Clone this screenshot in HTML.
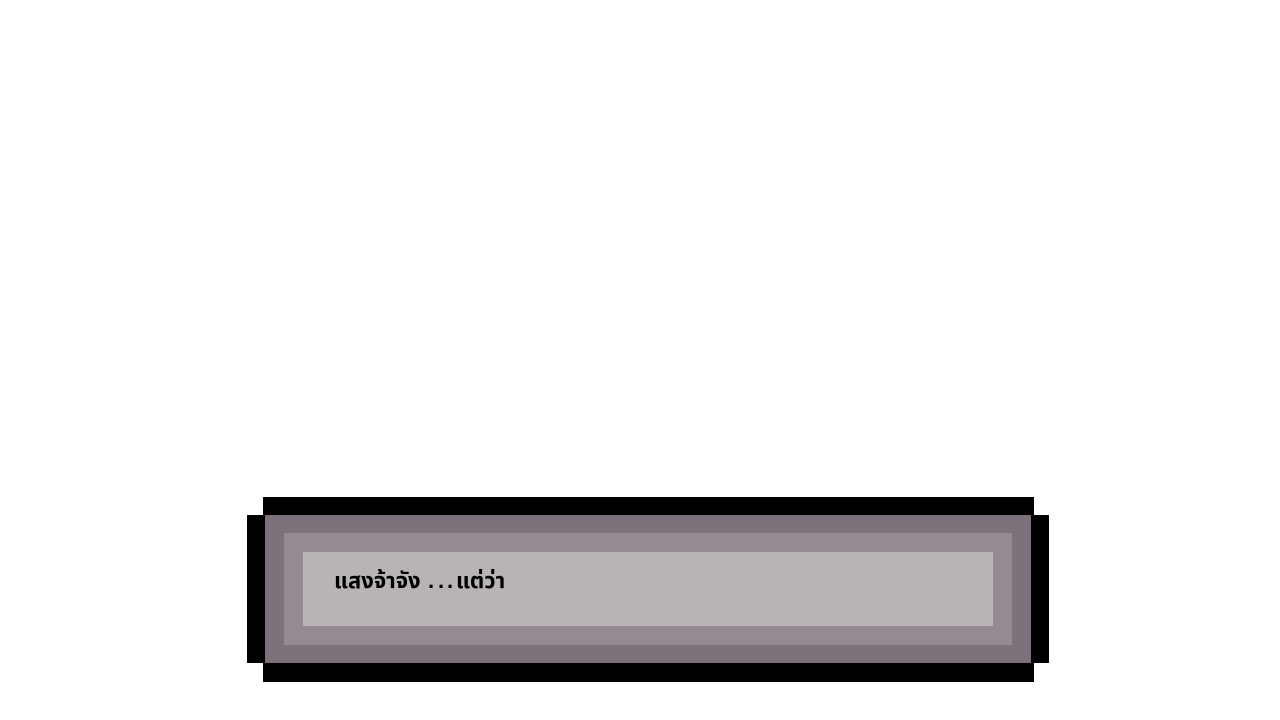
<!DOCTYPE html>
<html><head><meta charset="utf-8"><style>
html,body{margin:0;padding:0;background:#fff;width:1280px;height:720px;overflow:hidden;position:relative}
div{position:absolute}
.t{font-family:"Liberation Sans","Noto Sans Thai","DejaVu Sans",sans-serif;font-weight:bold;font-size:22px;color:#000;top:567px;white-space:nowrap;line-height:28px}
</style></head><body>
<div style="left:263px;top:497px;width:771px;height:185px;background:#000"></div>
<div style="left:247px;top:515px;width:802px;height:148px;background:#000"></div>
<div style="left:265px;top:515px;width:766px;height:148px;background:#7d717b"></div>
<div style="left:284px;top:533px;width:728px;height:112px;background:#938a92"></div>
<div style="left:303px;top:552px;width:690px;height:74px;background:#b8b3b7"></div>
<div class="t" style="left:334px">แสงจ้าจัง</div>
<div class="t" style="left:428px;letter-spacing:4px;font-family:'Liberation Sans',sans-serif">.</div>
<div class="t" style="left:438px;font-family:'Liberation Sans',sans-serif">.</div>
<div class="t" style="left:447px;font-family:'Liberation Sans',sans-serif">.</div>
<div class="t" style="left:456px">แต่ว่า</div>
</body></html>
